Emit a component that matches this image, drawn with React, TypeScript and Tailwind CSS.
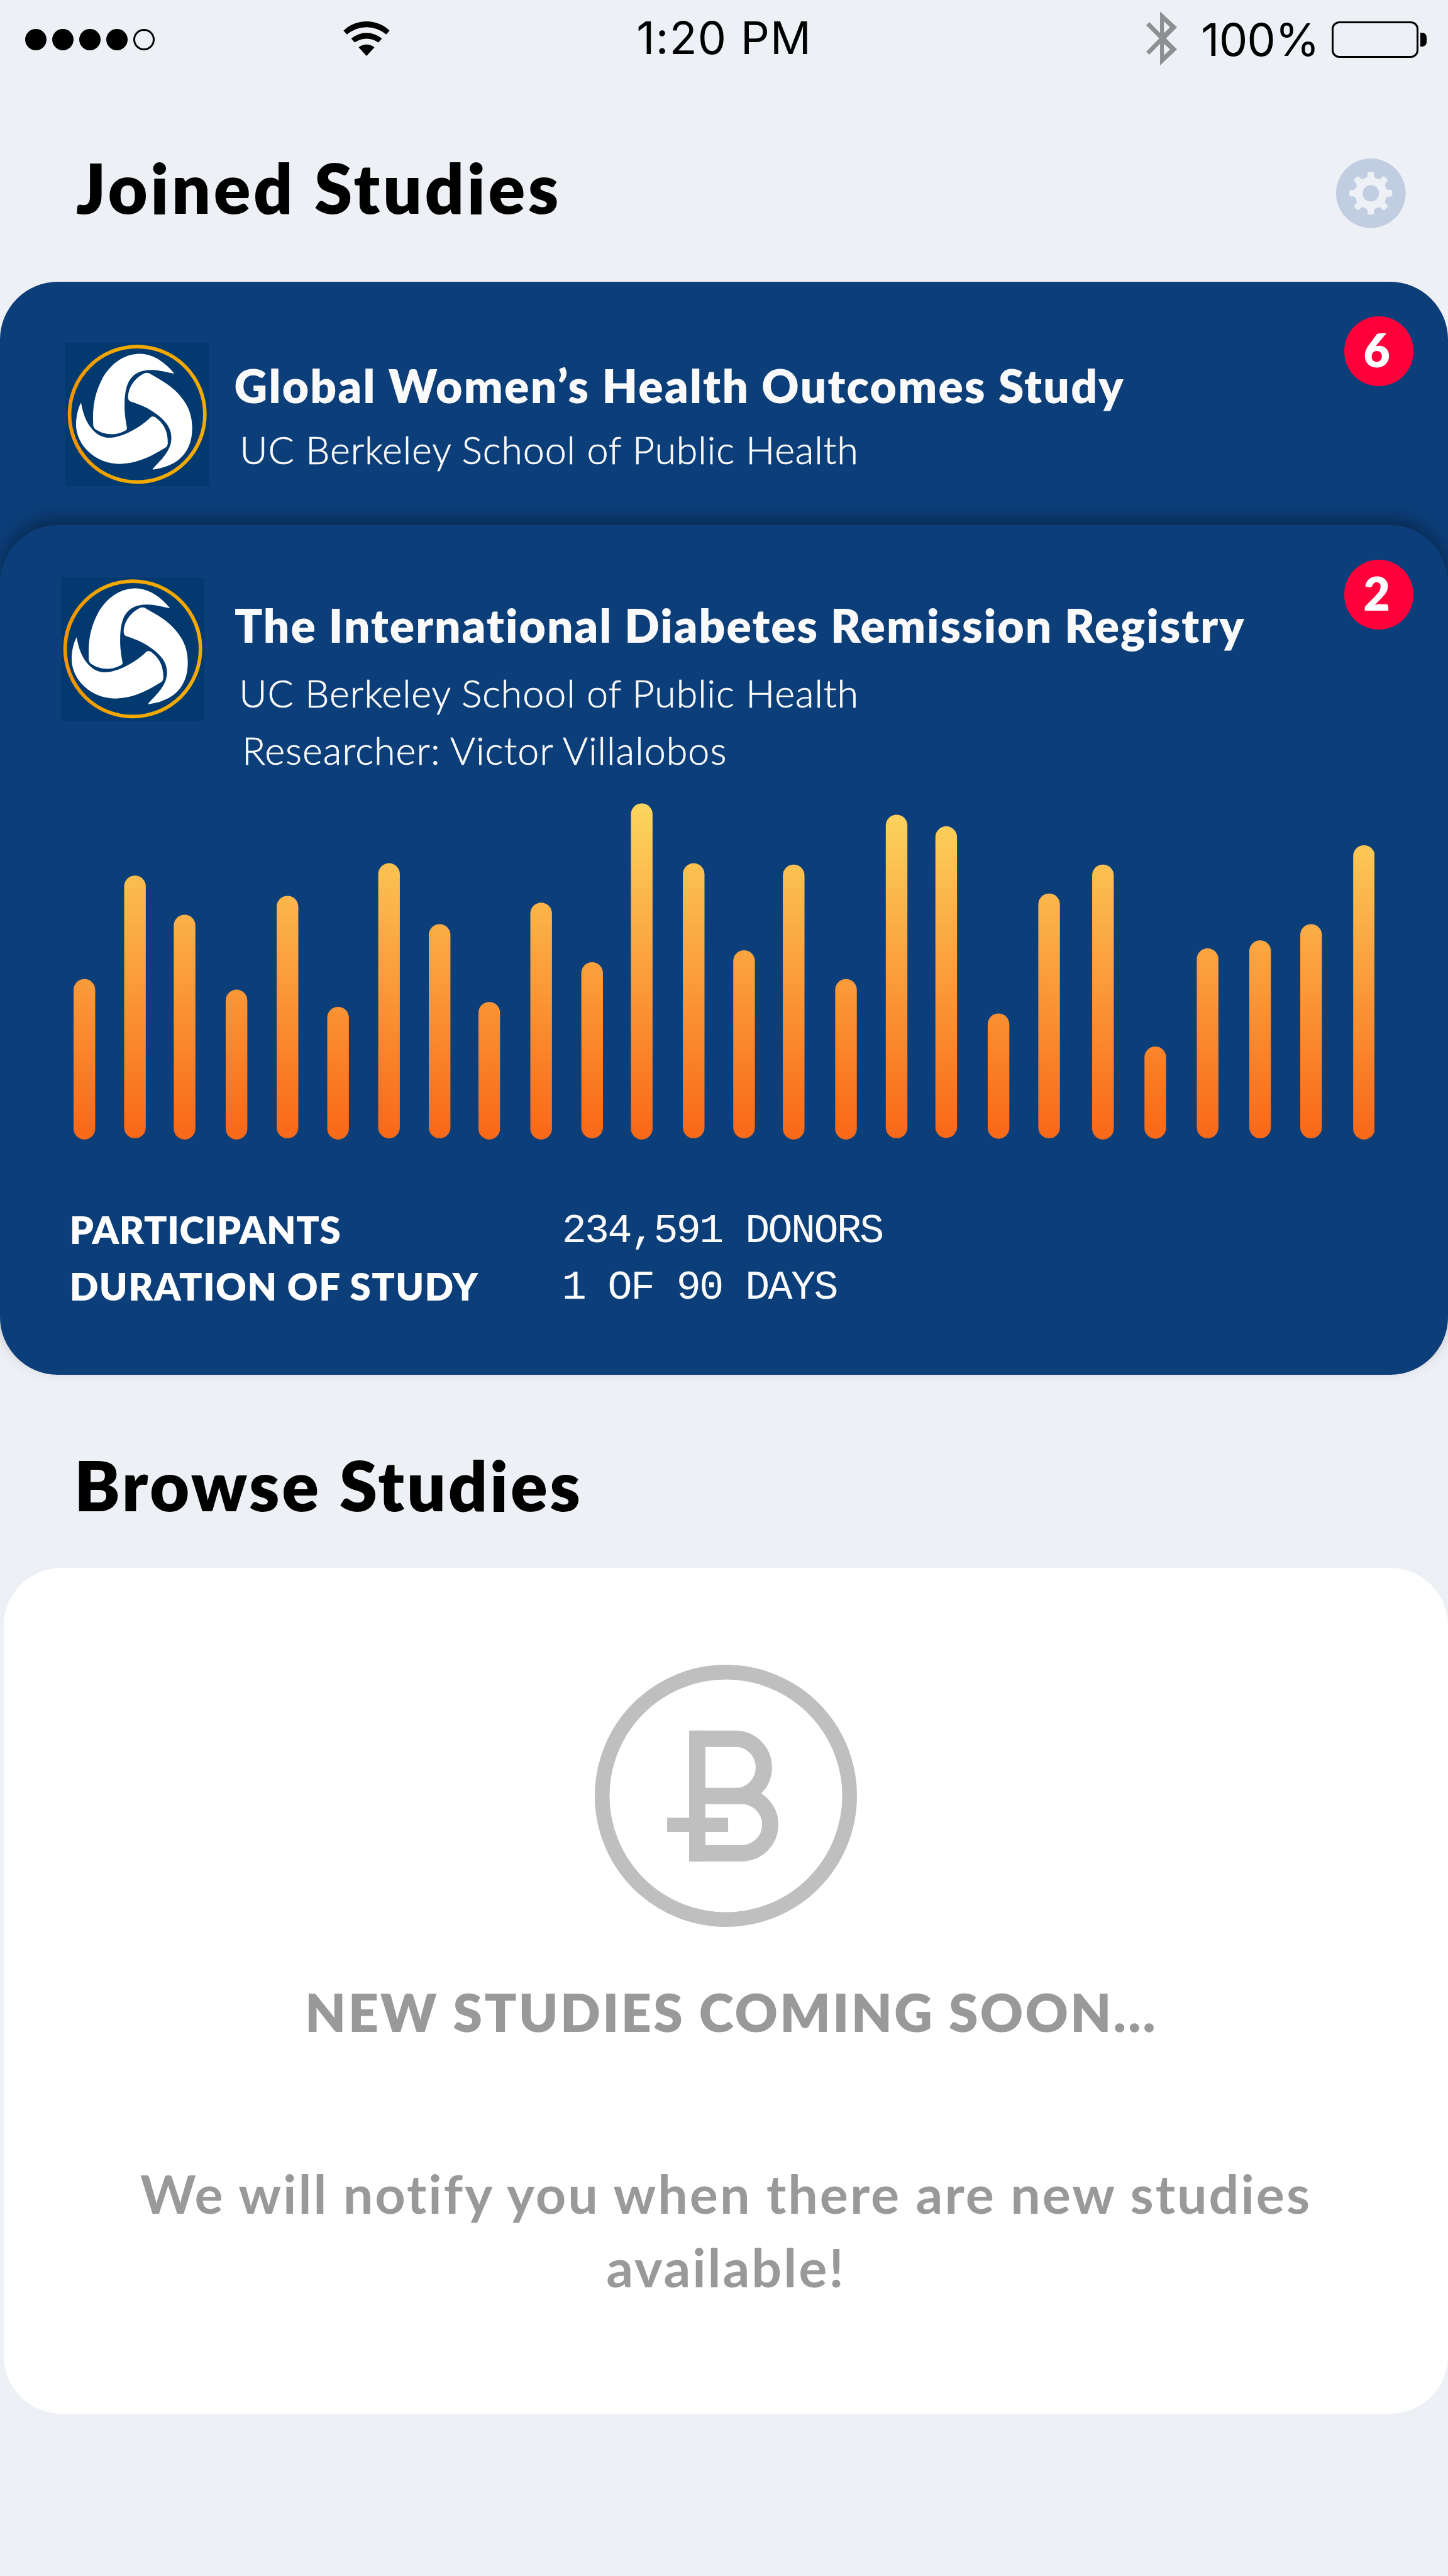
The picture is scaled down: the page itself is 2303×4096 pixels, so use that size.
import type { ReactNode } from 'react';

// x, top and bottom of every bar, in chart units
const bars: [number, number, number][] = [
  [190, 534.5, 950], [321, 266.6, 947], [449.5, 368, 950], [584, 562, 950], [716, 319, 947],
  [847, 606.5, 950], [979, 234.7, 947], [1110, 392.3, 947], [1238.5, 593.8, 950], [1373, 336.8, 950],
  [1505, 491, 947], [1633.5, 79.7, 950], [1768, 234.7, 947], [1898.5, 460, 947], [2027, 238, 950],
  [2162.5, 534.5, 950], [2293.5, 109, 947], [2422, 139, 946], [2557.5, 623.8, 948], [2688.5, 313, 947],
  [2828, 238, 950], [2963.5, 709, 948], [3099, 455, 947], [3235, 434.3, 947], [3367, 392.3, 947],
  [3504, 188, 950],
];

function Wifi() {
  return (
    <svg viewBox="0 0 120 90" className="h-[55px] w-[74px]">
      <path d="M0 24A87 87 0 0 1 120 24L111 34A78 78 0 0 0 9 34Z" />
      <path d="M20 45A61 61 0 0 1 100 45L90.5 55A51 51 0 0 0 29.5 55Z" />
      <path d="M39.5 67.5A32 32 0 0 1 80.5 67.5L60 90Z" />
    </svg>
  );
}

function Bluetooth() {
  return (
    <svg viewBox="0 0 80 140" className="h-[86px] w-[49px]" fill="#8e8f90">
      <path
        fillRule="evenodd"
        d="M36 0L80 41L51.5 70L80 98.500L36 140V84L8 112.500L0 104.500L34 70L0 36L8 27.500L36 56ZM46 26V56L62 41ZM46 84V114L62 98.500Z"
      />
    </svg>
  );
}

function Gear() {
  return (
    <svg viewBox="-90 -90 180 180" className="h-[110.500px] w-[110.500px]">
      <circle r="90" fill="#c1cde1" />
      <g fill="#edf0f5">
        {[0, 45, 90, 135, 180, 225, 270, 315].map((a) => (
          <path
            key={a}
            transform={`rotate(${a})`}
            d="M-8.500 -51.500Q-8.500 -55.500 -4.500 -55.500H4.500Q8.500 -55.500 8.500 -51.500V-45Q8.500 -42.500 11 -41.500L15 -30H-15L-11 -41.500Q-8.500 -42.500 -8.500 -45Z"
          />
        ))}
        <circle r="41.500" />
      </g>
      <circle r="21.300" fill="#c1cde1" />
    </svg>
  );
}

function SchoolLogo() {
  return (
    <svg viewBox="117 84 1114 1116" className="h-[228px] w-[228px] shrink-0">
      <defs>
        <linearGradient id="ring" x1="0" x2="1" y1="0.5" y2="0.4">
          <stop offset="0" stopColor="#f29400" />
          <stop offset="0.35" stopColor="#f4a900" />
        </linearGradient>
      </defs>
      <rect x="117" y="84" width="1114" height="1116" fill="#023a70" />
      <circle cx="675" cy="641" r="527" fill="none" stroke="url(#ring)" strokeWidth="28" />
      <g fill="#fff">
        <path d="M965 325C890 230 790 170 695 170C560 170 455 265 400 370C345 480 325 580 333 728Q334 742 344 752C385 783 430 796 480 796C525 794 560 780 588 764Q597 758 595 745C585 690 574 620 577 560C580 420 610 296 785 296C840 296 900 312 965 325Z" />
        <path d="M768 322C850 370 915 400 990 475C1060 550 1104 630 1103 750C1103 930 1000 1045 798 1071Q792 1067 800 1060C860 995 941 925 941 825C941 740 890 680 790 615C740 583 685 562 622 541Q604 532 604 510C606 430 655 360 732 322Q750 314 768 322Z" />
        <path d="M238 552C255 640 275 700 325 758C370 808 415 823 462 823C560 820 690 750 780 664Q796 652 815 663C885 712 915 780 913 870Q912 886 898 898C770 980 660 1026 540 1027C350 1027 199 880 199 720C199 660 213 600 234 556Z" />
      </g>
    </svg>
  );
}

function Coin() {
  return (
    <svg viewBox="83 83 1402 1402" className="h-[417px] w-[417px]" fill="none" stroke="#bfbfbf">
      <circle cx="784" cy="784" r="661.500" strokeWidth="79" />
      <g strokeWidth="87">
        <path d="M631 435V1135" />
        <path d="M631 479H836A151 153 0 0 1 836 785H631" />
        <path d="M836 785H869A152 153 0 0 1 869 1091H631" />
      </g>
      <path d="M470 939H796" strokeWidth="77" />
    </svg>
  );
}

function Chart() {
  return (
    <svg viewBox="190 79 3370 872" className="h-[535.500px] w-[2069.600px]">
      <defs>
        <linearGradient id="heat" gradientUnits="userSpaceOnUse" x1="0" x2="0" y1="79" y2="925">
          <stop offset="0" stopColor="#fcd65f" />
          <stop offset="1" stopColor="#f96a1a" />
        </linearGradient>
      </defs>
      {bars.map(([x, top, bottom]) => (
        <rect key={x} x={x} y={top} width="56" height={bottom - top} rx="28" fill="url(#heat)" />
      ))}
    </svg>
  );
}

function Badge({ children }: { children: ReactNode }) {
  return (
    <span className="absolute right-[55px] top-[55px] flex h-[110.500px] w-[110.500px] justify-center rounded-full bg-[#ff003b] pr-[6px] pt-[17px] text-[73px] font-extrabold leading-none text-white">
      {children}
    </span>
  );
}

export default function App() {
  return (
    <div className="h-[4096px] w-[2303px] overflow-hidden bg-[#edf0f5] font-['Lato',sans-serif] text-black">
      <header className="flex h-[243px] items-start font-['Inter',sans-serif] text-[71.800px] leading-none">
        <div className="ml-[40px] mt-[46px] flex gap-[9.200px]">
          <i className="h-[33.800px] w-[33.800px] rounded-full bg-black" />
          <i className="h-[33.800px] w-[33.800px] rounded-full bg-black" />
          <i className="h-[33.800px] w-[33.800px] rounded-full bg-black" />
          <i className="h-[33.800px] w-[33.800px] rounded-full bg-black" />
          <i className="h-[33.800px] w-[33.800px] rounded-full border-[3px] border-black" />
        </div>
        <div className="ml-[300px] mt-[34px]">
          <Wifi />
        </div>
        <div className="ml-[392.500px] mt-[24px] w-[300px] whitespace-nowrap tracking-[1.300px]">1:20 PM</div>
        <div className="ml-[511px] mt-[18px]">
          <Bluetooth />
        </div>
        <div className="ml-[38px] mt-[27px] w-[208px] whitespace-nowrap tracking-[-0.560px]">100%</div>
        <div className="mt-[34px] flex items-center gap-[3px]">
          <span className="h-[58px] w-[138px] rounded-[12px] border-[3px] border-black" />
          <span className="h-[21.500px] w-[9.500px] rounded-r-[7px] bg-black" />
        </div>
      </header>

      <section className="h-[2063px]">
        <div className="flex h-[205px] items-start justify-between">
          <h1 className="ml-[121px] whitespace-nowrap text-[109px] font-extrabold leading-none tracking-[4.570px]">Joined Studies</h1>
          <button className="mr-[67.500px] mt-[9px]">
            <Gear />
          </button>
        </div>

        <article className="relative h-[560px] rounded-t-[92px] bg-[#0c3e79] text-[#fafafa]">
          <Badge>6</Badge>
          <div className="flex pl-[104px] pt-[97px]">
            <SchoolLogo />
            <div className="pt-[31.500px]">
              <h2 className="ml-[40.500px] whitespace-nowrap text-[73px] font-extrabold leading-none tracking-[2.240px]">Global Women’s Health Outcomes Study</h2>
              <p className="ml-[49.300px] mt-[34.700px] whitespace-nowrap text-[61px] font-light leading-none tracking-[0.870px] [-webkit-text-stroke:0.7px_#fafafa]">UC Berkeley School of Public Health</p>
            </div>
          </div>
        </article>

        <article className="relative -mt-[173px] h-[1351px] rounded-[92px] bg-[#0c3e79] text-[#fafafa] shadow-[0_-12px_25px_rgba(0,0,0,0.3)]">
          <Badge>2</Badge>
          <div className="flex pl-[96.500px] pt-[83px]">
            <SchoolLogo />
            <div className="pt-[39.800px]">
              <h2 className="ml-[48.500px] whitespace-nowrap text-[73px] font-extrabold leading-none tracking-[2.030px]">The International Diabetes Remission Registry</h2>
              <p className="ml-[55.700px] mt-[40.600px] whitespace-nowrap text-[61px] font-light leading-none tracking-[0.910px] [-webkit-text-stroke:0.7px_#fafafa]">UC Berkeley School of Public Health</p>
              <p className="ml-[60.500px] mt-[29.200px] whitespace-nowrap text-[61px] font-light leading-none tracking-[1.020px] [-webkit-text-stroke:0.7px_#fafafa]">Researcher: Victor Villalobos</p>
            </div>
          </div>
          <div className="ml-[116.500px] mt-[54.400px]">
            <Chart />
          </div>
          <dl className="ml-[110.700px] mt-[111px] grid grid-cols-[783px_1fr] gap-y-[25px] whitespace-nowrap leading-[65px]">
            <dt className="text-[60px] font-extrabold text-white tracking-[0.670px]">PARTICIPANTS</dt>
            <dd className="relative top-[3px] font-['Liberation_Mono',monospace] text-[65px] tracking-[-2.570px]">234,591 DONORS</dd>
            <dt className="text-[60px] font-extrabold text-white tracking-[1.460px]">DURATION OF STUDY</dt>
            <dd className="relative top-[3px] font-['Liberation_Mono',monospace] text-[65px] tracking-[-2.570px]">1 OF 90 DAYS</dd>
          </dl>
        </article>
      </section>

      <section>
        <h1 className="ml-[118px] h-[187px] whitespace-nowrap text-[109px] font-extrabold leading-none tracking-[3.700px]">Browse Studies</h1>
        <article className="ml-[6px] flex h-[1345px] flex-col items-center rounded-[92px] bg-white pt-[154px] text-[#999]">
          <Coin />
          <h2 className="ml-[17px] mt-[93px] whitespace-nowrap text-[84px] font-extrabold leading-none tracking-[3.300px]">NEW STUDIES COMING SOON...</h2>
          <p className="mt-[188px] w-[1900px] text-center text-[84.500px] font-bold leading-[117px] tracking-[2.920px]">
            We will notify you when there are new studies available!
          </p>
        </article>
      </section>
    </div>
  );
}
